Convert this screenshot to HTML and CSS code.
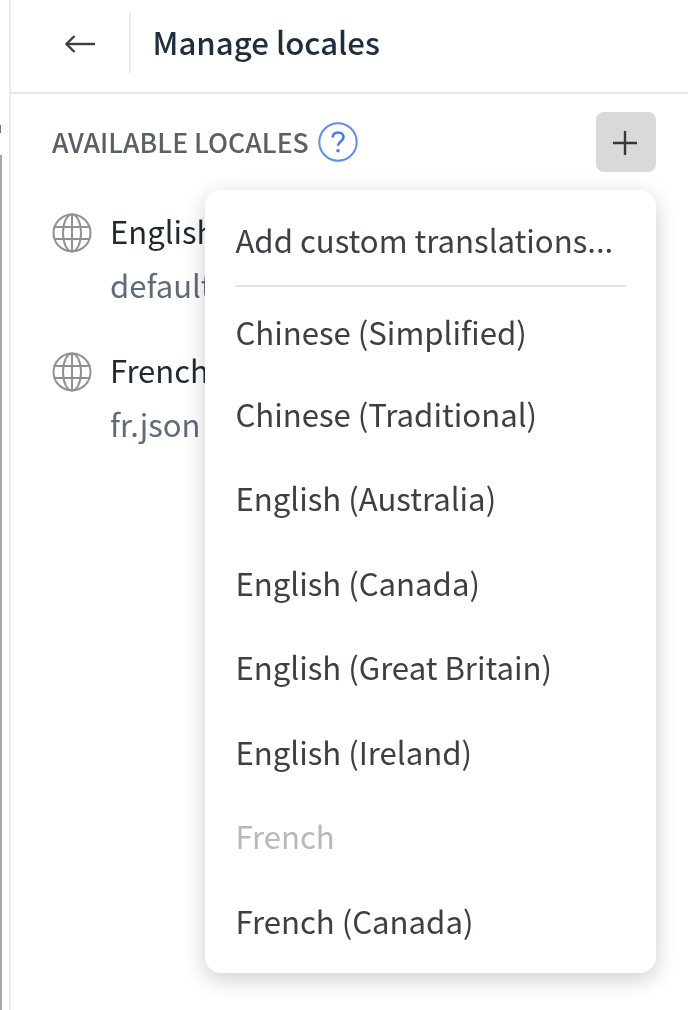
FILE: index.html
```html
<!DOCTYPE html>
<html lang="en">
<head>
<meta charset="utf-8">
<title>Manage locales</title>
<link rel="stylesheet" href="styles.css">
</head>
<body>
<div class="app">
  <div class="gutter"><div class="gutter-tick"></div><div class="gutter-edge"></div></div>
  <main class="panel">
    <header class="header">
      <button class="back" aria-label="Back">
        <svg width="32" height="20" viewBox="0 0 32 20" fill="none" stroke="#3a3f45" stroke-width="2.4"><path d="M2 10H31"/><path d="M10.500 2 2.500 10l8 8"/></svg>
      </button>
      <h1 class="title">Manage locales</h1>
    </header>
    <section class="content">
      <div class="section-head">
        <div class="section-label">
          <span class="label-text">AVAILABLE LOCALES</span>
          <svg class="help" width="40" height="40" viewBox="0 0 40 40" fill="none"><circle cx="20" cy="20" r="18.700" stroke="#5b8def" stroke-width="2"/><path d="M14.500 15.500c.4-3.300 2.700-5 5.600-5 3.100 0 5.400 1.800 5.400 4.600 0 4.400-5.500 4.300-5.500 8.700" stroke="#4a7de8" stroke-width="2.600"/><circle cx="20" cy="28.800" r="1.800" fill="#4a7de8"/></svg>
        </div>
        <button class="add" aria-label="Add locale">
          <svg width="26" height="26" viewBox="0 0 26 26" stroke="#33383d" stroke-width="2.400"><path d="M13 1v24M1 13h24"/></svg>
        </button>
      </div>
      <ul class="locales">
        <li class="locale">
          <svg class="globe" width="40" height="40" viewBox="0 0 40 40" fill="none" stroke="#8f9295" stroke-width="2"><circle cx="20" cy="20" r="18.500"/><ellipse cx="20" cy="20" rx="9" ry="18.500"/><path d="M2.500 14h35M2.500 26h35M20 1.500v37"/></svg>
          <div><div class="locale-name">English</div><div class="locale-file">default.json</div></div>
        </li>
        <li class="locale">
          <svg class="globe" width="40" height="40" viewBox="0 0 40 40" fill="none" stroke="#8f9295" stroke-width="2"><circle cx="20" cy="20" r="18.500"/><ellipse cx="20" cy="20" rx="9" ry="18.500"/><path d="M2.500 14h35M2.500 26h35M20 1.500v37"/></svg>
          <div><div class="locale-name">French</div><div class="locale-file">fr.json</div></div>
        </li>
      </ul>
    </section>
  </main>
  <div class="menu">
    <div class="menu-item custom">Add custom translations...</div>
    <div class="menu-divider"></div>
    <div class="menu-item first">Chinese (Simplified)</div>
    <div class="menu-item">Chinese (Traditional)</div>
    <div class="menu-item">English (Australia)</div>
    <div class="menu-item">English (Canada)</div>
    <div class="menu-item">English (Great Britain)</div>
    <div class="menu-item">English (Ireland)</div>
    <div class="menu-item disabled">French</div>
    <div class="menu-item">French (Canada)</div>
  </div>
</div>
</body>
</html>
```
FILE: styles.css
```css
* { box-sizing: border-box; }
html, body { margin: 0; height: 100%; background: #fff; overflow: hidden; }
body { font-family: "Noto Sans CJK SC", "Noto Sans", sans-serif; }
ul { list-style: none; margin: 0; padding: 0; }
button { border: 0; padding: 0; background: none; display: flex; align-items: center; justify-content: center; }

.app { position: relative; display: flex; height: 1010px; filter: blur(.45px); }
.gutter { width: 11px; flex: none; display: flex; flex-direction: column; border-right: 2px solid #ececec; padding-top: 125px; }
.gutter-tick { width: 1px; height: 8px; background: #777; margin-bottom: 22px; }
.gutter-edge { width: 2px; flex: 1; background: #a6a6a6; }
.panel { flex: 1; min-width: 0; display: flex; flex-direction: column; }

.header { height: 94px; flex: none; display: flex; align-items: center; padding: 0 0 6px 53px; border-bottom: 2px solid #e6e6e6; }
.back { width: 67px; height: 60px; justify-content: flex-start; border-right: 2px solid #ececec; margin-right: 21.500px; margin-top: -1px; padding-top: 2px; }
.title { margin: -3px 0 0; font-size: 31.200px; font-weight: 500; line-height: 40px; color: #1f2d3d; }

.content { padding: 18px 32px 0 41px; }
.section-head { display: flex; justify-content: space-between; align-items: center; height: 60px; margin-bottom: 37px; }
.section-label { display: flex; align-items: center; gap: 9px; }
.label-text { font-size: 26.600px; font-weight: 500; color: #5a6068; line-height: 40px; }
.add { width: 60px; height: 60px; border-radius: 8px; background: #d9d9d9; padding: 2px 2px 0 0; }

.locales { display: flex; flex-direction: column; gap: 40.500px; }
.locale { display: flex; gap: 18px; align-items: flex-start; }
.globe { flex: none; margin-top: 4px; }
.locale-name { font-size: 31px; line-height: 44px; color: #1f2933; }
.locale-file { font-size: 31px; line-height: 44px; color: #5f6b78; margin-top: 10px; }

.menu { position: absolute; left: 205px; top: 190px; width: 451px; height: 783px; padding: 19px 30px 0; background: #fff; border-radius: 16px; box-shadow: 0 6px 22px rgba(0, 0, 0, .2); }
.menu-item { height: 84.500px; line-height: 84px; padding-left: .4px; font-size: 31.150px; color: #3c4043; white-space: nowrap; }
.menu-item.first { height: 81.500px; }
.menu-item.custom { height: 62px; line-height: 62px; }
.menu-item.disabled { color: #b8b8b8; }
.menu-divider { height: 2px; background: #e4e4e4; margin: 14px 0 3px; }
```
